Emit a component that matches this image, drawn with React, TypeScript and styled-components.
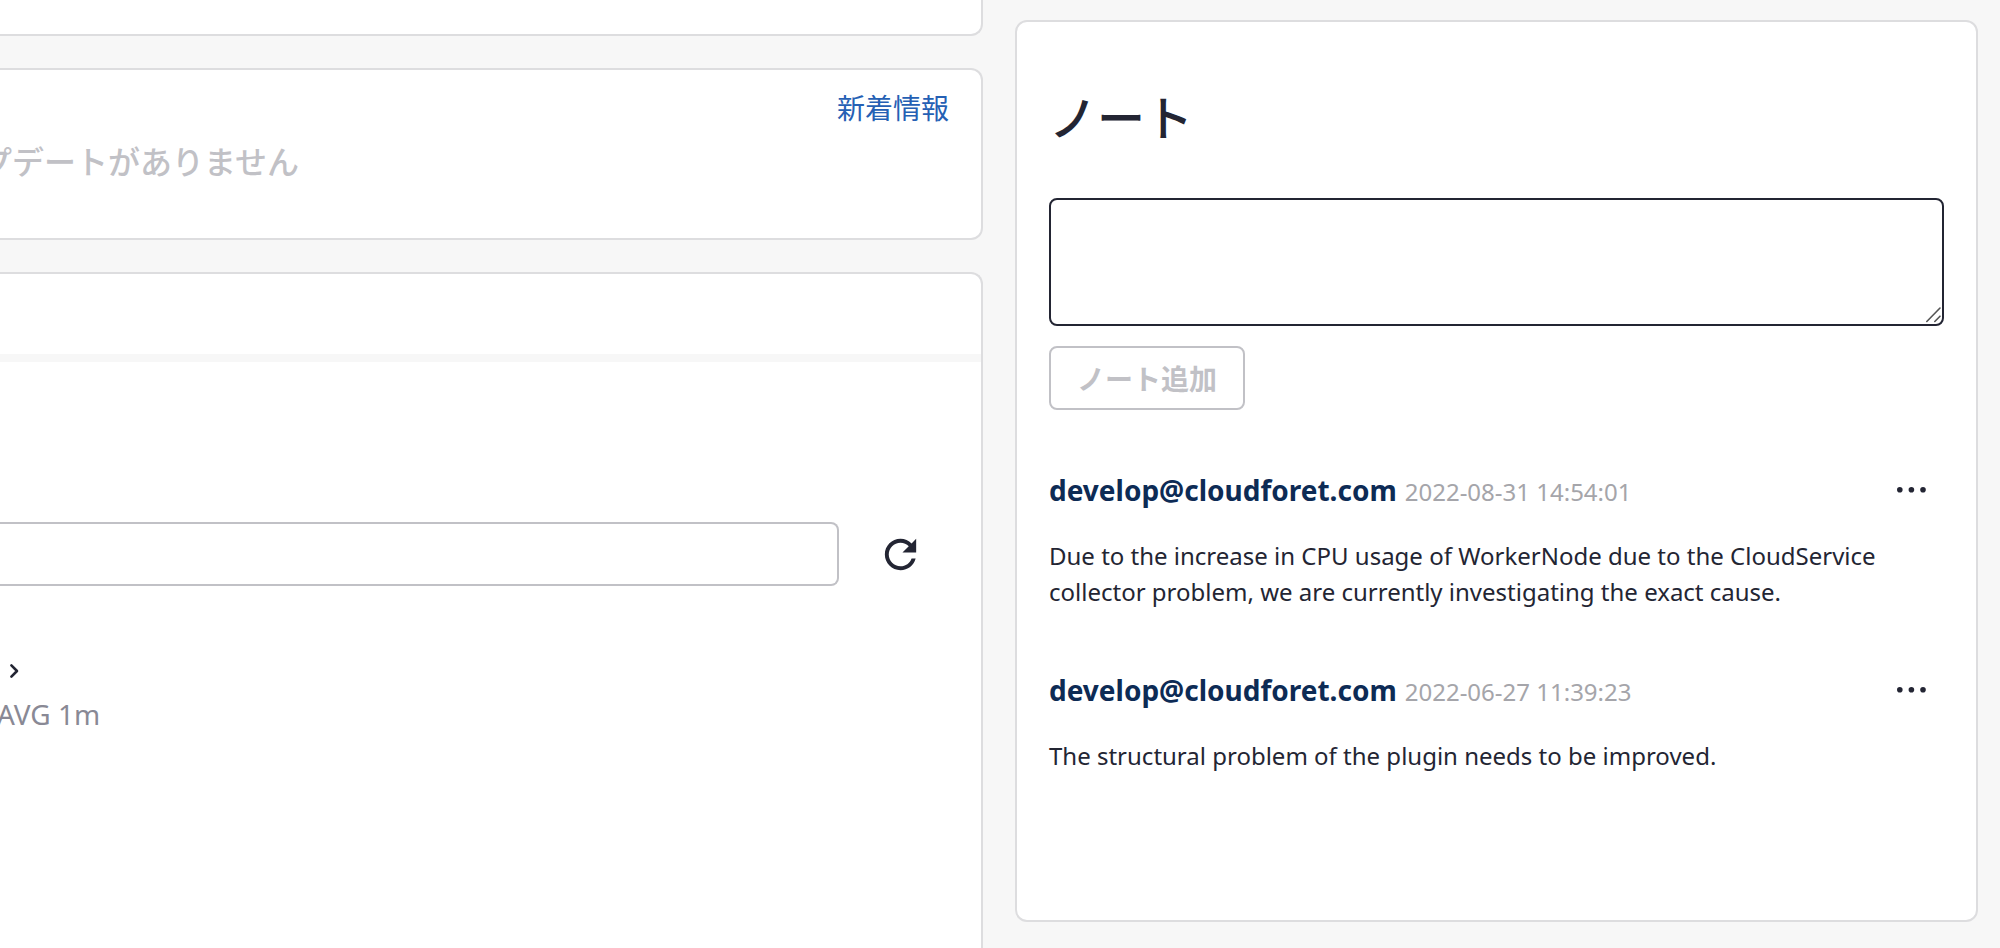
import React, { useState } from 'react';
import styled, { createGlobalStyle, css } from 'styled-components';

const color = {
  page: '#f7f7f7',
  border: '#dddddf',
  control: '#c1c1c6',
  text: '#232533',
  muted: '#898995',
  date: '#a5a5aa',
  link: '#2560b4',
  author: '#0d2b55',
};

const GlobalStyle = createGlobalStyle`
  *, *::before, *::after { box-sizing: border-box; }
  body {
    margin: 0;
    background: ${color.page};
    color: ${color.text};
    font-family: 'Noto Sans', 'Noto Sans CJK JP', sans-serif;
    overflow-x: hidden;
  }
  h2, p { margin: 0; }
`;

const Page = styled.div`
  display: grid;
  grid-template-columns: minmax(0, 983fr) minmax(0, 963fr);
  gap: 32px;
  min-height: 100vh;
  padding-right: 22px;
`;

const MainColumn = styled.main`
  display: flex;
  flex-direction: column;
  gap: 32px;
`;

const cardBase = css`
  background: #fff;
  border: 2px solid ${color.border};
  border-radius: 12px;
`;

const Panel = styled.section`
  ${cardBase}
  border-left: none;
  border-top-left-radius: 0;
  border-bottom-left-radius: 0;
`;

const SummaryPanel = styled(Panel)`
  height: 36px;
  border-top: none;
  border-top-right-radius: 0;
`;

const UpdatesPanel = styled(Panel)`
  display: flex;
  flex-direction: column;
  gap: 9px;
  padding: 17px 32px 54px 0;
`;

const UpdatesLink = styled.a`
  align-self: flex-end;
  color: ${color.link};
  font-family: 'Noto Sans CJK JP', sans-serif;
  font-size: 28px;
  line-height: 40px;
  text-decoration: none;
`;

const EmptyMessage = styled.p`
  margin-left: -20px;
  color: ${color.control};
  font-family: 'Noto Sans CJK JP', sans-serif;
  font-size: 32px;
  font-weight: 500;
  line-height: 48px;
  white-space: nowrap;
`;

const ChartPanel = styled(Panel)`
  flex: 1;
  border-bottom: none;
  border-bottom-right-radius: 0;
`;

const ChartHeader = styled.div`
  height: 88px;
  border-bottom: 8px solid ${color.page};
`;

const Toolbar = styled.div`
  display: flex;
  align-items: center;
  gap: 29px;
  margin-top: 160px;
  padding-right: 49px;
`;

const FilterInput = styled.input`
  flex: 1;
  min-width: 0;
  height: 64px;
  padding: 0 16px;
  border: 2px solid ${color.control};
  border-left: none;
  border-radius: 0 8px 8px 0;
  background: #fff;
  font: inherit;
  font-size: 28px;
  outline: none;
`;

const IconButton = styled.button`
  display: flex;
  align-items: center;
  justify-content: center;
  width: 64px;
  height: 64px;
  padding: 0;
  border: none;
  background: none;
  color: ${color.text};
`;

const Metric = styled.div`
  margin-top: 62px;
`;

const MetricLink = styled.button`
  display: flex;
  align-items: center;
  height: 46px;
  padding: 0 8px;
  border: none;
  background: none;
  color: ${color.text};
`;

const MetricUnit = styled.p`
  margin-left: -3px;
  color: ${color.muted};
  font-size: 28px;
  line-height: 40px;
`;

const NotesCard = styled.aside`
  ${cardBase}
  align-self: start;
  margin: 20px 0 26px;
  padding: 57px 32px 146px;
`;

const NotesTitle = styled.h2`
  margin-bottom: 47px;
  font-family: 'Noto Sans CJK JP', sans-serif;
  font-size: 48px;
  font-weight: 500;
  line-height: 72px;
`;

const NoteField = styled.div`
  position: relative;
  display: flex;
`;

const NoteInput = styled.textarea`
  flex: 1;
  height: 128px;
  padding: 12px 16px;
  border: 2px solid ${color.text};
  border-radius: 8px;
  background: #fff;
  font: inherit;
  font-size: 24px;
  outline: none;
  resize: none;
`;

const Grip = styled.svg`
  position: absolute;
  right: 2px;
  bottom: 2px;
  pointer-events: none;
`;

const AddButton = styled.button`
  display: block;
  height: 64px;
  margin-top: 20px;
  padding: 0 26px;
  border: 2px solid ${color.control};
  border-radius: 8px;
  background: #fff;
  color: ${color.control};
  font-family: 'Noto Sans CJK JP', sans-serif;
  font-size: 28px;
  font-weight: 700;
`;

const Note = styled.article`
  margin-top: 60px;
`;

const NoteHeader = styled.header`
  display: flex;
  align-items: center;
  justify-content: space-between;
  height: 42px;
  margin-bottom: 26px;
`;

const Byline = styled.p`
  display: flex;
  align-items: baseline;
  gap: 8px;
  line-height: 40px;
`;

const Author = styled.strong`
  color: ${color.author};
  font-size: 28px;
  font-weight: 700;
`;

const NoteDate = styled.time`
  color: ${color.date};
  font-size: 24px;
`;

const NoteText = styled.p`
  font-size: 24px;
  line-height: 36px;
`;

const RefreshIcon = () => (
  <svg width="47" height="47" viewBox="0 0 24 24" fill="currentColor" aria-hidden="true">
    <path d="M17.65 6.35C16.2 4.9 14.21 4 12 4c-4.42 0-7.99 3.58-7.99 8s3.57 8 7.99 8c3.73 0 6.84-2.55 7.73-6h-2.08c-.82 2.33-3.04 4-5.65 4-3.31 0-6-2.69-6-6s2.69-6 6-6c1.66 0 3.14.69 4.22 1.78L13 11h7V4l-2.35 2.35z" />
  </svg>
);

const ChevronIcon = () => (
  <svg width="12" height="18" viewBox="0 0 12 18" fill="none" stroke="currentColor" strokeWidth="2.6" strokeLinecap="round" strokeLinejoin="round" aria-hidden="true">
    <path d="M3.4 3.4L9 9l-5.6 5.6" />
  </svg>
);

const MoreIcon = () => (
  <svg width="32" height="32" viewBox="0 0 32 32" fill="currentColor" aria-hidden="true">
    <circle cx="3.8" cy="14.7" r="2.8" />
    <circle cx="15.4" cy="14.7" r="2.8" />
    <circle cx="27" cy="14.7" r="2.8" />
  </svg>
);

const notes = [
  {
    author: 'develop@cloudforet.com',
    date: '2022-08-31 14:54:01',
    text: 'Due to the increase in CPU usage of WorkerNode due to the CloudService collector problem, we are currently investigating the exact cause.',
  },
  {
    author: 'develop@cloudforet.com',
    date: '2022-06-27 11:39:23',
    text: 'The structural problem of the plugin needs to be improved.',
  },
];

export default function App() {
  const [draft, setDraft] = useState('');

  return (
    <>
      <GlobalStyle />
      <Page lang="ja">
        <MainColumn>
          <SummaryPanel />
          <UpdatesPanel>
            <UpdatesLink href="#updates">新着情報</UpdatesLink>
            <EmptyMessage>プデートがありません</EmptyMessage>
          </UpdatesPanel>
          <ChartPanel>
            <ChartHeader />
            <Toolbar>
              <FilterInput type="text" aria-label="検索" />
              <IconButton type="button" aria-label="更新">
                <RefreshIcon />
              </IconButton>
            </Toolbar>
            <Metric>
              <MetricLink type="button" aria-label="詳細">
                <ChevronIcon />
              </MetricLink>
              <MetricUnit>AVG 1m</MetricUnit>
            </Metric>
          </ChartPanel>
        </MainColumn>
        <NotesCard>
          <NotesTitle id="notes-title">ノート</NotesTitle>
          <NoteField>
            <NoteInput
              aria-labelledby="notes-title"
              value={draft}
              onChange={(event) => setDraft(event.target.value)}
            />
            <Grip width="20" height="20" viewBox="0 0 20 20" fill="none" stroke="#555" strokeWidth="1.6" strokeLinecap="round" aria-hidden="true">
              <path d="M4.8 17.5L18 4M12.8 17.5L18 12.2" />
            </Grip>
          </NoteField>
          <AddButton type="button" disabled={!draft}>ノート追加</AddButton>
          {notes.map((note) => (
            <Note key={note.date}>
              <NoteHeader>
                <Byline>
                  <Author>{note.author}</Author>
                  <NoteDate>{note.date}</NoteDate>
                </Byline>
                <IconButton type="button" aria-label="メニュー">
                  <MoreIcon />
                </IconButton>
              </NoteHeader>
              <NoteText>{note.text}</NoteText>
            </Note>
          ))}
        </NotesCard>
      </Page>
    </>
  );
}
